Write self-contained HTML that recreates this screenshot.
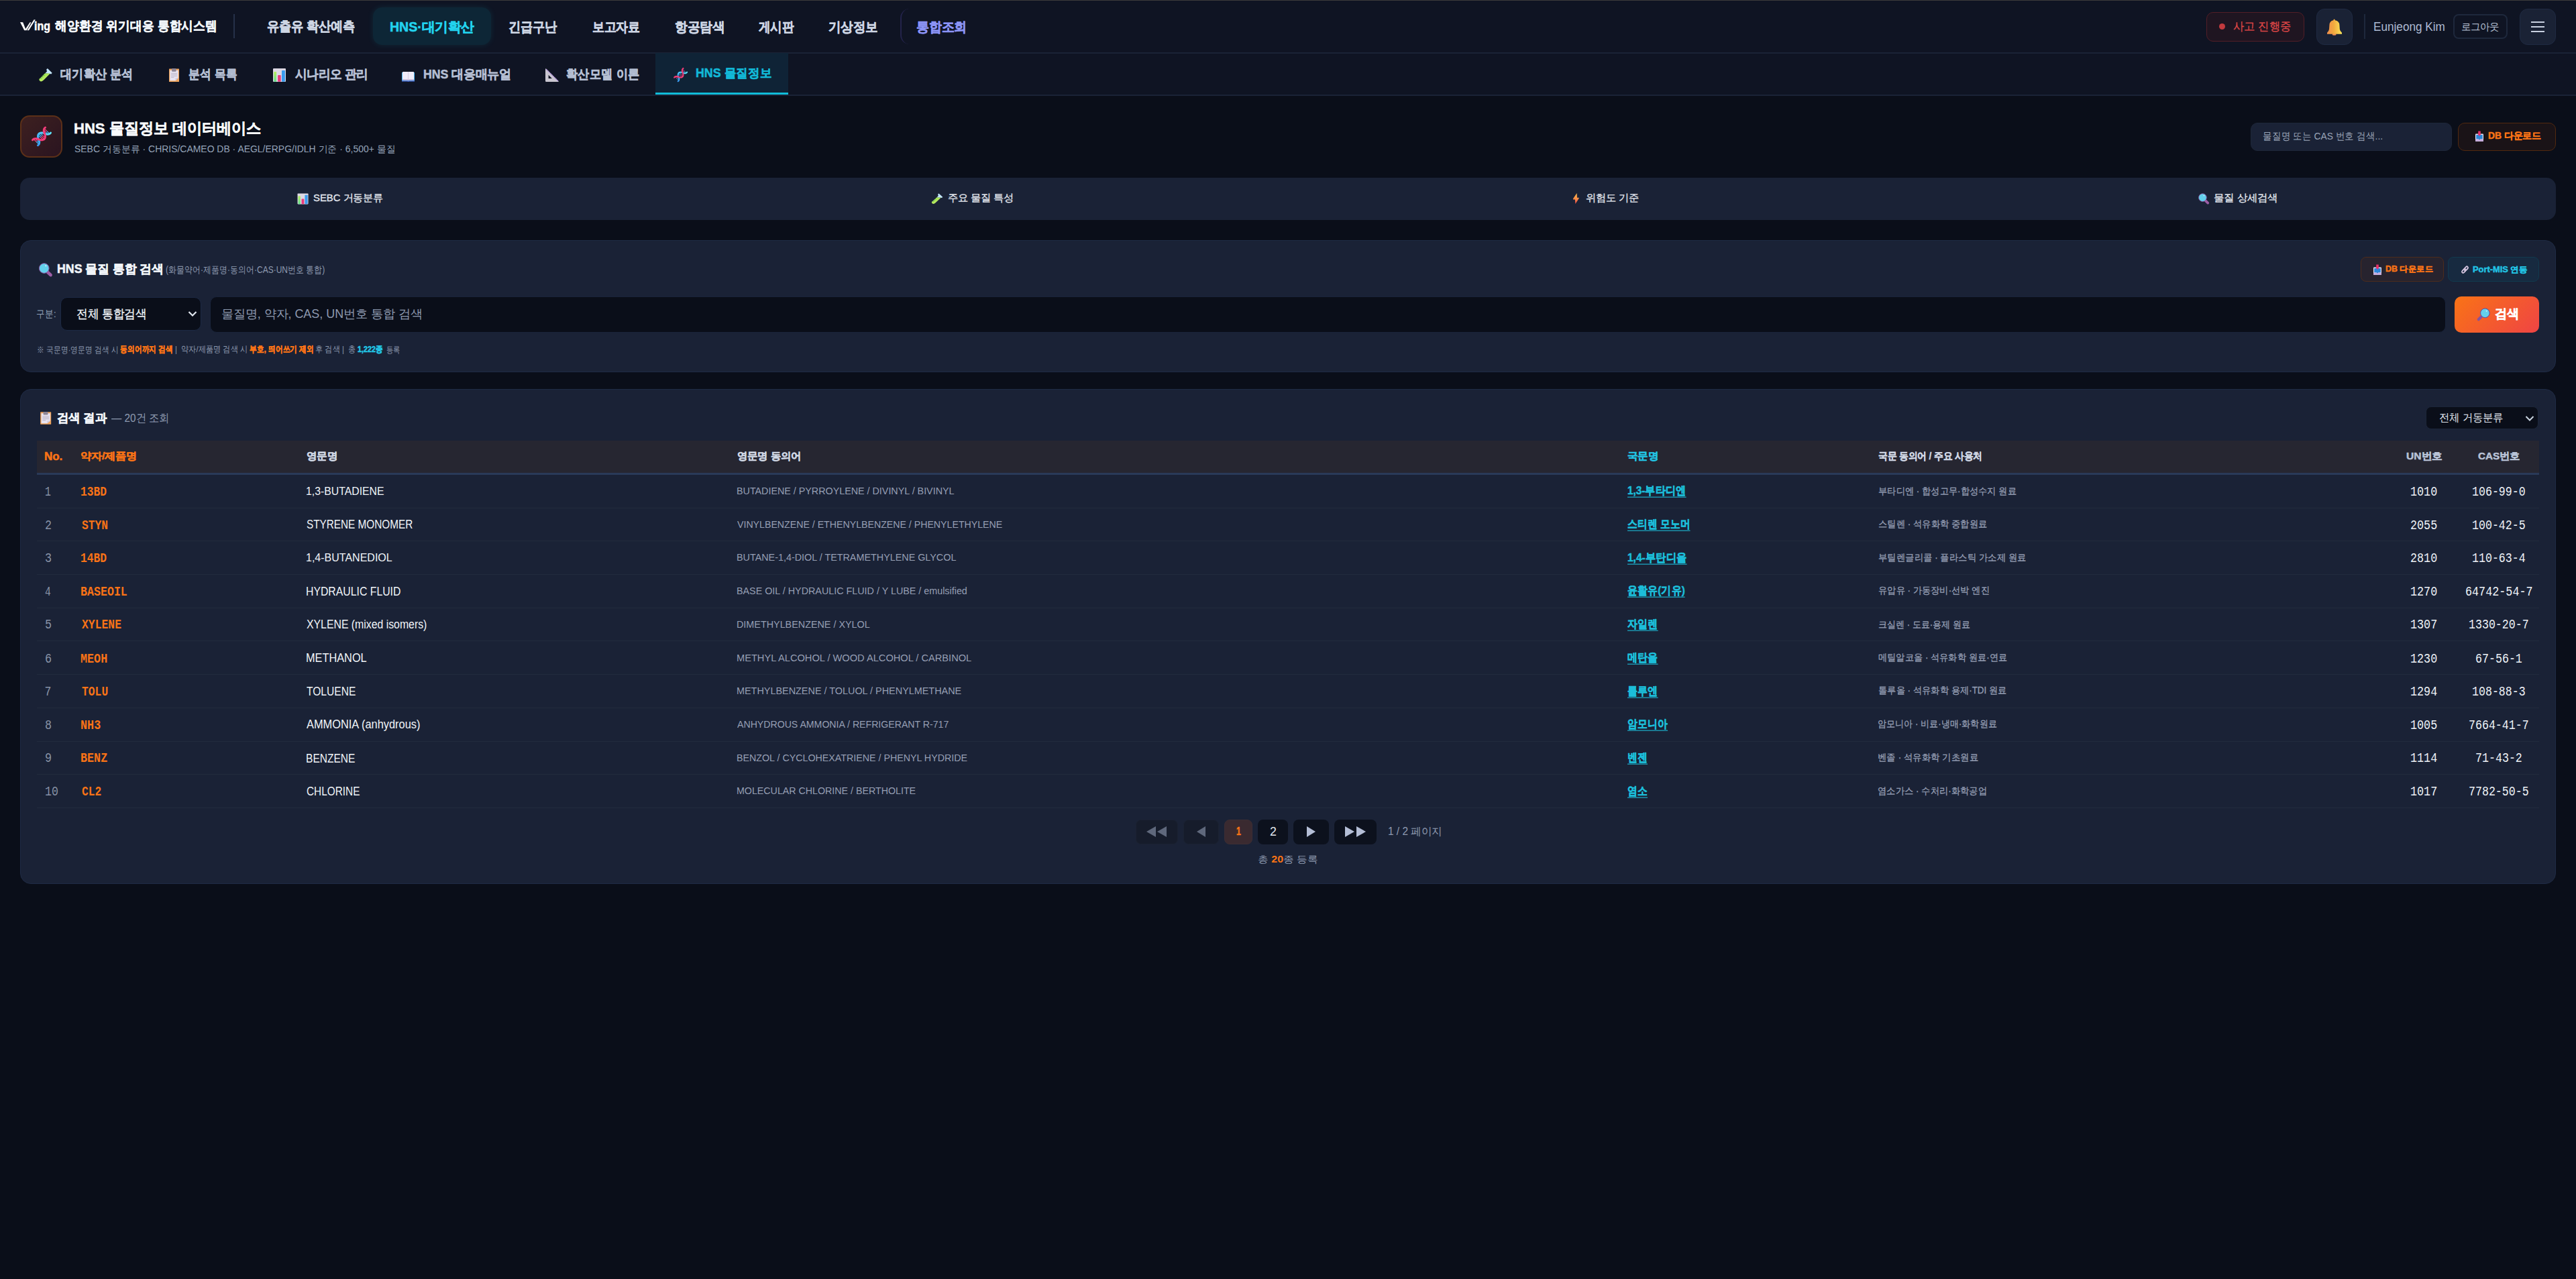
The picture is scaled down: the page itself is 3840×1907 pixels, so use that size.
<!DOCTYPE html>
<html lang="ko"><head><meta charset="utf-8"><title>HNS 물질정보</title>
<style>
*{box-sizing:border-box;margin:0;padding:0}
html,body{width:3840px;height:1907px;overflow:hidden}
body{background:#0a0e19;font-family:"Liberation Sans",sans-serif;color:#e2e8f0;position:relative}
.a{position:absolute}
.t{white-space:nowrap;transform-origin:0 50%}
</style></head><body>
<div class="a" style="left:0px;top:0px;width:3840px;height:1px;background:#3c3c3c"></div>
<div class="a" style="left:0px;top:1px;width:3840px;height:77px;background:#0f1423"></div>
<div class="a" style="left:0px;top:78px;width:3840px;height:2px;background:#1a2336"></div>
<div class="a" style="left:0px;top:80px;width:3840px;height:61px;background:#0f1423"></div>
<div class="a" style="left:0px;top:141px;width:3840px;height:2px;background:#1a2336"></div>
<svg class="a" style="left:20px;top:20px" width="40" height="40" viewBox="0 0 40 40"><path d="M10 13 L14.2 13.2 L18.6 24.6 L16.2 25.2 Z" fill="#fff"/><path d="M16.6 25.2 L24.6 13.2 L26.4 13.4 L19.6 25.2 Z" fill="#fff"/><path d="M20.4 25.2 L30.6 9.2 L32.8 9.4 L23 25.2 Z" fill="#fff"/></svg>
<div class="a t" id="t1" style="left:50.8px;top:20.0px;height:38px;line-height:38px;font-size:19px;color:#ffffff;font-weight:bold;-webkit-text-stroke:0.5px #ffffff;transform:scale(0.8382,1.0000);">ing</div>
<div class="a t" id="t2" style="left:82.1px;top:21.0px;height:36px;line-height:36px;font-size:18px;color:#f1f5f9;font-weight:bold;-webkit-text-stroke:0.5px #f1f5f9;transform:scale(0.9918,1.0640);">해양환경 위기대응 통합시스템</div>
<div class="a" style="left:348px;top:21px;width:2px;height:36px;background:#263149"></div>
<div class="a" style="left:556px;top:11px;width:176px;height:56px;border-radius:14px;background:#0d2636;box-shadow:0 0 10px rgba(34,211,238,0.10)"></div>
<div class="a t" id="t3" style="left:397.5px;top:21.0px;height:36px;line-height:36px;font-size:18px;color:#cdd5e3;font-weight:bold;-webkit-text-stroke:0.5px #cdd5e3;transform:scale(1.0000,1.0980);">유출유 확산예측</div>
<div class="a t" id="t4" style="left:580.5px;top:21.5px;height:36px;line-height:36px;font-size:18px;color:#22d3ee;font-weight:bold;-webkit-text-stroke:0.5px #22d3ee;transform:scale(1.0863,1.0980);">HNS·대기확산</div>
<div class="a t" id="t5" style="left:757.5px;top:21.5px;height:36px;line-height:36px;font-size:18px;color:#cdd5e3;font-weight:bold;-webkit-text-stroke:0.5px #cdd5e3;transform:scale(1.0006,1.0980);">긴급구난</div>
<div class="a t" id="t6" style="left:882.5px;top:21.5px;height:36px;line-height:36px;font-size:18px;color:#cdd5e3;font-weight:bold;-webkit-text-stroke:0.5px #cdd5e3;transform:scale(0.9861,1.0980);">보고자료</div>
<div class="a t" id="t7" style="left:1005.5px;top:21.5px;height:36px;line-height:36px;font-size:18px;color:#cdd5e3;font-weight:bold;-webkit-text-stroke:0.5px #cdd5e3;transform:scale(1.0291,1.0980);">항공탐색</div>
<div class="a t" id="t8" style="left:1131.1px;top:21.5px;height:36px;line-height:36px;font-size:18px;color:#cdd5e3;font-weight:bold;-webkit-text-stroke:0.5px #cdd5e3;transform:scale(0.9643,1.0980);">게시판</div>
<div class="a t" id="t9" style="left:1234.5px;top:21.5px;height:36px;line-height:36px;font-size:18px;color:#cdd5e3;font-weight:bold;-webkit-text-stroke:0.5px #cdd5e3;transform:scale(1.0139,1.0980);">기상정보</div>
<div class="a" style="left:1342px;top:13px;width:118px;height:53px;border-left:2px solid #23234a;border-radius:14px 0 0 14px"></div>
<div class="a t" id="t10" style="left:1365.5px;top:21.5px;height:36px;line-height:36px;font-size:18px;color:#8b93f5;font-weight:bold;-webkit-text-stroke:0.5px #8b93f5;transform:scale(1.0429,1.0980);">통합조회</div>
<div class="a" style="left:3289px;top:18px;width:146px;height:44px;border:1.5px solid #521e27;background:#1f1521;border-radius:10px"></div>
<div class="a" style="left:3308px;top:35px;width:9px;height:9px;border-radius:50%;background:#c23a3e"></div>
<div class="a t" id="t11" style="left:3328.9px;top:24.0px;height:32px;line-height:32px;font-size:16px;color:#dc4646;font-weight:normal;-webkit-text-stroke:0.3px #dc4646;transform:scale(1.0245,1.0700);">사고 진행중</div>
<div class="a" style="left:3453px;top:13px;width:54px;height:54px;border-radius:12px;background:#1a2235;border:1.5px solid #1f2a42"></div>
<svg class="a" style="left:3466.00px;top:24.99px" width="28.00" height="31.02" viewBox="4.0 1.0 28.0 30.9" preserveAspectRatio="none"><defs><linearGradient id="be1" x1="0" y1="0" x2="1" y2="0"><stop offset="0" stop-color="#f08e4c"/><stop offset="0.45" stop-color="#f2aa3e"/><stop offset="1" stop-color="#fde65a"/></linearGradient></defs><ellipse cx="17.6" cy="27.3" rx="3" ry="1.3" fill="#ee8c5a"/><path d="M17.6 4.4 Q16.4 4.4 16.4 6.3 Q10.8 7 10.4 13.5 L10 19.5 Q9.6 22.8 7 24.6 L7 26.6 L29 26.6 L29 24.6 Q26.2 22.8 25.8 19.5 L25.4 13.5 Q25 7 18.8 6.3 Q18.8 4.4 17.6 4.4 Z" fill="url(#be1)"/></svg>
<div class="a" style="left:3524px;top:21px;width:2px;height:37px;background:#1e283c"></div>
<div class="a t" id="t12" style="left:3537.8px;top:22.5px;height:34px;line-height:34px;font-size:17px;color:#aebbd3;font-weight:normal;transform:scale(1.0096,1.1000);">Eunjeong Kim</div>
<div class="a" style="left:3657px;top:21px;width:81px;height:37px;border:2px solid #1e283c;border-radius:8px"></div>
<div class="a t" id="t13" style="left:3669.0px;top:25.5px;height:28px;line-height:28px;font-size:14px;color:#b9c3d6;font-weight:normal;transform:scale(1.0007,1.0377);">로그아웃</div>
<div class="a" style="left:3756px;top:13px;width:54px;height:54px;border-radius:12px;background:#1a2235;border:1.5px solid #1f2a42"></div>
<div class="a" style="left:3773px;top:32px;width:20px;height:2px;background:#c8d0e0"></div>
<div class="a" style="left:3773px;top:39px;width:20px;height:2px;background:#c8d0e0"></div>
<div class="a" style="left:3773px;top:46px;width:20px;height:2px;background:#c8d0e0"></div>
<div class="a" style="left:977px;top:79px;width:198px;height:62px;background:#0f2336"></div>
<div class="a" style="left:977px;top:138px;width:198px;height:3px;background:#10bcd8"></div>
<svg class="a" style="left:55.00px;top:99.00px" width="26.00" height="26.00" viewBox="-3.0 -3.0 26.0 26.0" preserveAspectRatio="none"><defs><linearGradient id="tt2" x1="0" y1="0" x2="1" y2="1"><stop offset="0" stop-color="#86dc3c"/><stop offset="1" stop-color="#e0f47e"/></linearGradient></defs><path d="M9 7.6 L12 4.6 L11.2 1.6 L12.9 0 L19.7 6.8 L18.2 8.4 L16.4 7.9 Z" fill="#c2e4fb"/><path d="M8.8 7.6 L16.8 7.6 L7.2 17.3 Q3.8 20.9 1.2 18.5 Q-1 16 2.2 14.2 Z" fill="url(#tt2)"/><path d="M6.6 9.6 l1.3 1.3 M4.4 11.8 l1.3 1.3 M2.4 13.9 l1.2 1.2" stroke="#177a66" stroke-width="0.9" fill="none"/></svg>
<div class="a t" id="t14" style="left:89.6px;top:94.0px;height:34px;line-height:34px;font-size:17px;color:#b4bed2;font-weight:bold;-webkit-text-stroke:0.5px #b4bed2;transform:scale(1.0196,1.1400);">대기확산 분석</div>
<svg class="a" style="left:249.00px;top:98.97px" width="21.00" height="26.06" viewBox="5.0 4.2 21.0 25.8" preserveAspectRatio="none"><rect x="8" y="7.7" width="15" height="19.3" rx="0.6" fill="#eea45e"/><path d="M9.3 9.8 L21.7 9.8 L21.7 21.3 L17.6 25.3 L9.3 25.3 Z" fill="#e7e3f1"/><path d="M17.6 25.3 L17.6 21.3 L21.7 21.3 Z" fill="#cfc9de"/><rect x="12.1" y="7.2" width="6.5" height="4.7" rx="0.9" fill="#8d8595"/><g stroke="#b8b1c3" stroke-width="0.9"><line x1="11" y1="14.4" x2="20" y2="14.4"/><line x1="11" y1="16.4" x2="20" y2="16.4"/><line x1="11" y1="18.4" x2="20" y2="18.4"/><line x1="11" y1="20.4" x2="15.5" y2="20.4"/></g></svg>
<div class="a t" id="t15" style="left:280.6px;top:94.0px;height:34px;line-height:34px;font-size:17px;color:#b4bed2;font-weight:bold;-webkit-text-stroke:0.5px #b4bed2;transform:scale(1.0004,1.1400);">분석 목록</div>
<svg class="a" style="left:404.00px;top:99.00px" width="25.00" height="26.00" viewBox="4.0 4.0 25.0 26.0" preserveAspectRatio="none"><defs><linearGradient id="bc3" x1="0" y1="0" x2="0" y2="1"><stop offset="0" stop-color="#b6ee5c"/><stop offset="1" stop-color="#5ede8c"/></linearGradient></defs><rect x="7" y="7" width="19" height="20" rx="1" fill="#dcd8e4"/><rect x="8.3" y="11.9" width="3.8" height="14.9" rx="0.6" fill="url(#bc3)"/><rect x="14.1" y="17" width="4.6" height="9.8" rx="0.8" fill="#ea3c7c"/><rect x="20" y="9.9" width="4.9" height="16.9" rx="0.8" fill="#3a9cee"/></svg>
<div class="a t" id="t16" style="left:440.2px;top:94.5px;height:34px;line-height:34px;font-size:17px;color:#b4bed2;font-weight:bold;-webkit-text-stroke:0.5px #b4bed2;transform:scale(1.0193,1.0918);">시나리오 관리</div>
<svg class="a" style="left:596.00px;top:104.02px" width="25.00" height="20.96" viewBox="4.0 8.9 25.0 21.1" preserveAspectRatio="none"><path d="M7 12.9 L26 12.9 L26 26.2 L17.6 26.2 L16.5 27 L15.4 26.2 L7 26.2 Z" fill="#4ab6f6"/><path d="M7 25.2 L26 25.2 L26 26.4 L17.6 26.4 L16.5 27 L15.4 26.4 L7 26.4 Z" fill="#4a5cc0"/><rect x="8" y="11.9" width="17" height="12.7" rx="0.8" fill="#efebf8"/><path d="M8 23 L25 23 L25 24.6 L17.2 24.6 L16.5 25.3 L15.8 24.6 L8 24.6 Z" fill="#c9b8d8"/><line x1="16.5" y1="12" x2="16.5" y2="24.8" stroke="#cfc7e0" stroke-width="0.8"/></svg>
<div class="a t" id="t17" style="left:630.6px;top:94.5px;height:34px;line-height:34px;font-size:17px;color:#b4bed2;font-weight:bold;-webkit-text-stroke:0.5px #b4bed2;transform:scale(1.0409,1.0918);">HNS 대응매뉴얼</div>
<svg class="a" style="left:810.00px;top:99.00px" width="26.00" height="26.00" viewBox="-3.0 -3.0 26.0 26.0" preserveAspectRatio="none"><path d="M0 1.2 Q0 0 1.1 0.4 L19.6 18.9 Q20.2 20 19 20 L1.2 20 Q0 20 0 18.8 Z" fill="#c9c6d0"/><path d="M4.6 9.8 L4.6 14.9 L9.8 14.9 Z" fill="#0f1423"/><circle cx="1.90" cy="1.90" r="0.75" fill="#a872ee"/><circle cx="3.92" cy="3.92" r="0.75" fill="#a872ee"/><circle cx="5.94" cy="5.94" r="0.75" fill="#a872ee"/><circle cx="7.96" cy="7.96" r="0.75" fill="#a872ee"/><circle cx="9.98" cy="9.98" r="0.75" fill="#a872ee"/><circle cx="12.00" cy="12.00" r="0.75" fill="#a872ee"/><circle cx="14.02" cy="14.02" r="0.75" fill="#a872ee"/><circle cx="16.04" cy="16.04" r="0.75" fill="#a872ee"/><circle cx="18.06" cy="18.06" r="0.75" fill="#a872ee"/></svg>
<div class="a t" id="t18" style="left:843.6px;top:94.0px;height:34px;line-height:34px;font-size:17px;color:#b4bed2;font-weight:bold;-webkit-text-stroke:0.5px #b4bed2;transform:scale(1.0283,1.1400);">확산모델 이론</div>
<svg class="a" style="left:1001.90px;top:98.86px" width="25.20" height="25.27" viewBox="4.0 5.5 36.0 35.5" preserveAspectRatio="none"><defs><linearGradient id="dn4" x1="0" y1="1" x2="1" y2="0"><stop offset="0" stop-color="#3a9cf6"/><stop offset="1" stop-color="#5ee4fa"/></linearGradient></defs><line x1="18.06" y1="35.10" x2="14.08" y2="31.12" stroke="#3eb4f4" stroke-width="1.4"/><line x1="14.08" y1="31.12" x2="10.10" y2="27.14" stroke="#e8407c" stroke-width="1.4"/><line x1="18.74" y1="32.67" x2="15.64" y2="29.56" stroke="#3eb4f4" stroke-width="1.4"/><line x1="15.64" y1="29.56" x2="12.53" y2="26.46" stroke="#e8407c" stroke-width="1.4"/><line x1="16.76" y1="21.07" x2="20.44" y2="24.76" stroke="#3eb4f4" stroke-width="1.4"/><line x1="20.44" y1="24.76" x2="24.13" y2="28.44" stroke="#e8407c" stroke-width="1.4"/><line x1="17.90" y1="19.10" x2="22.00" y2="23.20" stroke="#3eb4f4" stroke-width="1.4"/><line x1="22.00" y1="23.20" x2="26.10" y2="27.30" stroke="#e8407c" stroke-width="1.4"/><line x1="19.87" y1="17.96" x2="23.56" y2="21.64" stroke="#3eb4f4" stroke-width="1.4"/><line x1="23.56" y1="21.64" x2="27.24" y2="25.33" stroke="#e8407c" stroke-width="1.4"/><line x1="31.47" y1="19.94" x2="28.36" y2="16.84" stroke="#3eb4f4" stroke-width="1.4"/><line x1="28.36" y1="16.84" x2="25.26" y2="13.73" stroke="#e8407c" stroke-width="1.4"/><line x1="33.90" y1="19.26" x2="29.92" y2="15.28" stroke="#3eb4f4" stroke-width="1.4"/><line x1="29.92" y1="15.28" x2="25.94" y2="11.30" stroke="#e8407c" stroke-width="1.4"/><path d="M16.45 36.74 L16.89 36.45 L17.29 36.11 L17.64 35.73 L17.94 35.30 L18.20 34.82 L18.41 34.30 L18.57 33.73 L18.69 33.11 L18.76 32.44 L18.77 31.72 L18.72 30.94 L18.60 30.08 L18.36 29.11 L17.77 27.78 L16.91 26.19 L16.65 25.19 L16.52 24.33 L16.46 23.54 L16.47 22.81 L16.53 22.14 L16.64 21.51 L16.80 20.94 L17.01 20.41 L17.26 19.93 L17.55 19.49 L17.90 19.10 L18.29 18.75 L18.73 18.46 L19.21 18.21 L19.74 18.00 L20.31 17.84 L20.94 17.73 L21.61 17.67 L22.34 17.66 L23.13 17.72 L23.99 17.85 L24.99 18.11 L26.58 18.97 L27.91 19.56 L28.88 19.80 L29.74 19.92 L30.52 19.97 L31.24 19.96 L31.91 19.89 L32.53 19.77 L33.10 19.61 L33.62 19.40 L34.10 19.14 L34.53 18.84 L34.91 18.49 L35.25 18.09 L35.54 17.65" fill="none" stroke="url(#dn4)" stroke-width="2.9" stroke-linecap="round"/><path d="M8.46 28.75 L8.75 28.31 L9.09 27.91 L9.47 27.56 L9.90 27.26 L10.38 27.00 L10.90 26.79 L11.47 26.63 L12.09 26.51 L12.76 26.44 L13.48 26.43 L14.26 26.48 L15.12 26.60 L16.09 26.84 L17.42 27.43 L19.01 28.29 L20.01 28.55 L20.87 28.68 L21.66 28.74 L22.39 28.73 L23.06 28.67 L23.69 28.56 L24.26 28.40 L24.79 28.19 L25.27 27.94 L25.71 27.65 L26.10 27.30 L26.45 26.91 L26.74 26.47 L26.99 25.99 L27.20 25.46 L27.36 24.89 L27.47 24.26 L27.53 23.59 L27.54 22.86 L27.48 22.07 L27.35 21.21 L27.09 20.21 L26.23 18.62 L25.64 17.29 L25.40 16.32 L25.28 15.46 L25.23 14.68 L25.24 13.96 L25.31 13.29 L25.43 12.67 L25.59 12.10 L25.80 11.58 L26.06 11.10 L26.36 10.67 L26.71 10.29 L27.11 9.95 L27.55 9.66" fill="none" stroke="#f23c78" stroke-width="2.9" stroke-linecap="round"/></svg>
<div class="a t" id="t19" style="left:1036.6px;top:92.5px;height:34px;line-height:34px;font-size:17px;color:#12b8d6;font-weight:bold;-webkit-text-stroke:0.5px #12b8d6;transform:scale(1.0470,1.0800);">HNS 물질정보</div>
<div class="a" style="left:30px;top:172px;width:63px;height:63px;border-radius:14px;border:2px solid #5c3018;background:linear-gradient(135deg,#3d2020,#2a1420)"></div>
<svg class="a" style="left:44.00px;top:186.05px" width="36.00" height="34.90" viewBox="4.0 5.5 36.0 35.5" preserveAspectRatio="none"><defs><linearGradient id="dn5" x1="0" y1="1" x2="1" y2="0"><stop offset="0" stop-color="#3a9cf6"/><stop offset="1" stop-color="#5ee4fa"/></linearGradient></defs><line x1="18.06" y1="35.10" x2="14.08" y2="31.12" stroke="#3eb4f4" stroke-width="1.4"/><line x1="14.08" y1="31.12" x2="10.10" y2="27.14" stroke="#e8407c" stroke-width="1.4"/><line x1="18.74" y1="32.67" x2="15.64" y2="29.56" stroke="#3eb4f4" stroke-width="1.4"/><line x1="15.64" y1="29.56" x2="12.53" y2="26.46" stroke="#e8407c" stroke-width="1.4"/><line x1="16.76" y1="21.07" x2="20.44" y2="24.76" stroke="#3eb4f4" stroke-width="1.4"/><line x1="20.44" y1="24.76" x2="24.13" y2="28.44" stroke="#e8407c" stroke-width="1.4"/><line x1="17.90" y1="19.10" x2="22.00" y2="23.20" stroke="#3eb4f4" stroke-width="1.4"/><line x1="22.00" y1="23.20" x2="26.10" y2="27.30" stroke="#e8407c" stroke-width="1.4"/><line x1="19.87" y1="17.96" x2="23.56" y2="21.64" stroke="#3eb4f4" stroke-width="1.4"/><line x1="23.56" y1="21.64" x2="27.24" y2="25.33" stroke="#e8407c" stroke-width="1.4"/><line x1="31.47" y1="19.94" x2="28.36" y2="16.84" stroke="#3eb4f4" stroke-width="1.4"/><line x1="28.36" y1="16.84" x2="25.26" y2="13.73" stroke="#e8407c" stroke-width="1.4"/><line x1="33.90" y1="19.26" x2="29.92" y2="15.28" stroke="#3eb4f4" stroke-width="1.4"/><line x1="29.92" y1="15.28" x2="25.94" y2="11.30" stroke="#e8407c" stroke-width="1.4"/><path d="M16.45 36.74 L16.89 36.45 L17.29 36.11 L17.64 35.73 L17.94 35.30 L18.20 34.82 L18.41 34.30 L18.57 33.73 L18.69 33.11 L18.76 32.44 L18.77 31.72 L18.72 30.94 L18.60 30.08 L18.36 29.11 L17.77 27.78 L16.91 26.19 L16.65 25.19 L16.52 24.33 L16.46 23.54 L16.47 22.81 L16.53 22.14 L16.64 21.51 L16.80 20.94 L17.01 20.41 L17.26 19.93 L17.55 19.49 L17.90 19.10 L18.29 18.75 L18.73 18.46 L19.21 18.21 L19.74 18.00 L20.31 17.84 L20.94 17.73 L21.61 17.67 L22.34 17.66 L23.13 17.72 L23.99 17.85 L24.99 18.11 L26.58 18.97 L27.91 19.56 L28.88 19.80 L29.74 19.92 L30.52 19.97 L31.24 19.96 L31.91 19.89 L32.53 19.77 L33.10 19.61 L33.62 19.40 L34.10 19.14 L34.53 18.84 L34.91 18.49 L35.25 18.09 L35.54 17.65" fill="none" stroke="url(#dn5)" stroke-width="2.9" stroke-linecap="round"/><path d="M8.46 28.75 L8.75 28.31 L9.09 27.91 L9.47 27.56 L9.90 27.26 L10.38 27.00 L10.90 26.79 L11.47 26.63 L12.09 26.51 L12.76 26.44 L13.48 26.43 L14.26 26.48 L15.12 26.60 L16.09 26.84 L17.42 27.43 L19.01 28.29 L20.01 28.55 L20.87 28.68 L21.66 28.74 L22.39 28.73 L23.06 28.67 L23.69 28.56 L24.26 28.40 L24.79 28.19 L25.27 27.94 L25.71 27.65 L26.10 27.30 L26.45 26.91 L26.74 26.47 L26.99 25.99 L27.20 25.46 L27.36 24.89 L27.47 24.26 L27.53 23.59 L27.54 22.86 L27.48 22.07 L27.35 21.21 L27.09 20.21 L26.23 18.62 L25.64 17.29 L25.40 16.32 L25.28 15.46 L25.23 14.68 L25.24 13.96 L25.31 13.29 L25.43 12.67 L25.59 12.10 L25.80 11.58 L26.06 11.10 L26.36 10.67 L26.71 10.29 L27.11 9.95 L27.55 9.66" fill="none" stroke="#f23c78" stroke-width="2.9" stroke-linecap="round"/></svg>
<div class="a t" id="t20" style="left:110.2px;top:168.0px;height:46px;line-height:46px;font-size:23px;color:#f8fafc;font-weight:bold;-webkit-text-stroke:0.5px #f8fafc;transform:scale(0.9586,0.9900);">HNS 물질정보 데이터베이스</div>
<div class="a t" id="t21" style="left:110.8px;top:206.5px;height:30px;line-height:30px;font-size:15px;color:#94a3b8;font-weight:normal;transform:scale(0.9300,0.9450);">SEBC 거동분류 · CHRIS/CAMEO DB · AEGL/ERPG/IDLH 기준 · 6,500+ 물질</div>
<div class="a" style="left:3355px;top:183px;width:300px;height:42px;border-radius:10px;background:#1a2236;border:1px solid #1e2739"></div>
<div class="a t" id="t22" style="left:3373.1px;top:189.5px;height:26px;line-height:26px;font-size:13px;color:#9aa5b8;font-weight:normal;transform:scale(1.0596,1.1846);">물질명 또는 CAS 번호 검색...</div>
<div class="a" style="left:3664px;top:183px;width:146px;height:42px;border-radius:10px;border:1.5px solid #52290f;background:#1a1317"></div>
<svg class="a" style="left:3687.00px;top:192.00px" width="18.00" height="22.00" viewBox="3.0 2.0 18.0 22.0" preserveAspectRatio="none"><rect x="6" y="9.4" width="12" height="11.4" rx="0.9" fill="#e6e0f0"/><rect x="6" y="17.4" width="12" height="3.4" rx="0.9" fill="#c7addf"/><path d="M7.2 10.9 L16.8 10.9 L16.8 17.2 L13.4 17.2 L12 18.4 L10.6 17.2 L7.2 17.2 Z" fill="#2d86d8"/><path d="M10.2 5.6 L13.8 5.6 L13.8 10 L14.4 10 L12 12.9 L9.6 10 L10.2 10 Z" fill="#e8306c"/></svg>
<div class="a t" id="t23" style="left:3708.8px;top:188.0px;height:28px;line-height:28px;font-size:14px;color:#f97316;font-weight:bold;-webkit-text-stroke:0.5px #f97316;transform:scale(0.9878,0.9900);">DB 다운로드</div>
<div class="a" style="left:30px;top:265px;width:3780px;height:63px;border-radius:14px;background:#1a2236"></div>
<svg class="a" style="left:441.47px;top:285.60px" width="21.05" height="20.80" viewBox="4.0 4.0 25.0 26.0" preserveAspectRatio="none"><defs><linearGradient id="bc6" x1="0" y1="0" x2="0" y2="1"><stop offset="0" stop-color="#b6ee5c"/><stop offset="1" stop-color="#5ede8c"/></linearGradient></defs><rect x="7" y="7" width="19" height="20" rx="1" fill="#dcd8e4"/><rect x="8.3" y="11.9" width="3.8" height="14.9" rx="0.6" fill="url(#bc6)"/><rect x="14.1" y="17" width="4.6" height="9.8" rx="0.8" fill="#ea3c7c"/><rect x="20" y="9.9" width="4.9" height="16.9" rx="0.8" fill="#3a9cee"/></svg>
<div class="a t" id="t24" style="left:466.8px;top:280.0px;height:30px;line-height:30px;font-size:15px;color:#e5e9f0;font-weight:normal;-webkit-text-stroke:0.3px #e5e9f0;transform:scale(0.9907,0.9844);">SEBC 거동분류</div>
<svg class="a" style="left:1386.45px;top:285.60px" width="22.10" height="20.80" viewBox="-3.0 -3.0 26.0 26.0" preserveAspectRatio="none"><defs><linearGradient id="tt7" x1="0" y1="0" x2="1" y2="1"><stop offset="0" stop-color="#86dc3c"/><stop offset="1" stop-color="#e0f47e"/></linearGradient></defs><path d="M9 7.6 L12 4.6 L11.2 1.6 L12.9 0 L19.7 6.8 L18.2 8.4 L16.4 7.9 Z" fill="#c2e4fb"/><path d="M8.8 7.6 L16.8 7.6 L7.2 17.3 Q3.8 20.9 1.2 18.5 Q-1 16 2.2 14.2 Z" fill="url(#tt7)"/><path d="M6.6 9.6 l1.3 1.3 M4.4 11.8 l1.3 1.3 M2.4 13.9 l1.2 1.2" stroke="#177a66" stroke-width="0.9" fill="none"/></svg>
<div class="a t" id="t25" style="left:1412.8px;top:280.0px;height:30px;line-height:30px;font-size:15px;color:#e5e9f0;font-weight:normal;-webkit-text-stroke:0.3px #e5e9f0;transform:scale(1.0000,0.9844);">주요 물질 특성</div>
<svg class="a" style="left:2342.13px;top:285.07px" width="14.74" height="21.85" viewBox="-3.0 -3.0 15.4 22.4" preserveAspectRatio="none"><defs><linearGradient id="bo8" x1="0" y1="0" x2="0" y2="1"><stop offset="0" stop-color="#fbbd4c"/><stop offset="0.55" stop-color="#f98a46"/><stop offset="1" stop-color="#f24848"/></linearGradient></defs><path d="M5.9 0 L0 8.9 L0.4 9.9 L3.1 9.9 L3.7 16.4 L9.4 7.8 L9.1 6.9 L6.4 6.9 Z" fill="url(#bo8)"/></svg>
<div class="a t" id="t26" style="left:2363.8px;top:280.0px;height:30px;line-height:30px;font-size:15px;color:#e5e9f0;font-weight:normal;-webkit-text-stroke:0.3px #e5e9f0;transform:scale(1.0000,0.9844);">위험도 기준</div>
<svg class="a" style="left:3274.00px;top:285.00px" width="22.00" height="22.00" viewBox="2.0 1.0 22.0 22.0" preserveAspectRatio="none"><line x1="15.6" y1="15.2" x2="19.2" y2="18.6" stroke="#9d5ea6" stroke-width="3.8" stroke-linecap="round"/><circle cx="11.4" cy="10.6" r="5.9" fill="#63d0ec" stroke="#8c4f9e" stroke-width="0.8"/><circle cx="13.4" cy="7.6" r="0.9" fill="#cfe9f8"/></svg>
<div class="a t" id="t27" style="left:3299.8px;top:280.0px;height:30px;line-height:30px;font-size:15px;color:#e5e9f0;font-weight:normal;-webkit-text-stroke:0.3px #e5e9f0;transform:scale(1.0108,0.9844);">물질 상세검색</div>
<div class="a" style="left:30px;top:358px;width:3780px;height:197px;border-radius:16px;background:#1a2236;border:1px solid #1f2b45"></div>
<svg class="a" style="left:54.25px;top:388.25px" width="27.50" height="27.50" viewBox="2.0 1.0 22.0 22.0" preserveAspectRatio="none"><line x1="15.6" y1="15.2" x2="19.2" y2="18.6" stroke="#9d5ea6" stroke-width="3.8" stroke-linecap="round"/><circle cx="11.4" cy="10.6" r="5.9" fill="#63d0ec" stroke="#8c4f9e" stroke-width="0.8"/><circle cx="13.4" cy="7.6" r="0.9" fill="#cfe9f8"/></svg>
<div class="a t" id="t28" style="left:84.5px;top:383.0px;height:36px;line-height:36px;font-size:18px;color:#f1f5f9;font-weight:bold;-webkit-text-stroke:0.5px #f1f5f9;transform:scale(0.9879,0.9961);">HNS 물질 통합 검색</div>
<div class="a t" id="t29" style="left:247.0px;top:389.5px;height:24px;line-height:24px;font-size:12px;color:#8e9ab0;font-weight:normal;transform:scale(1.0001,1.1846);">(화물약어·제품명·동의어·CAS·UN번호 통합)</div>
<div class="a" style="left:3519px;top:383px;width:124px;height:37px;border-radius:8px;border:1.5px solid #4d2c1c;background:#27232e"></div>
<svg class="a" style="left:3535.00px;top:391.00px" width="18.00" height="22.00" viewBox="3.0 2.0 18.0 22.0" preserveAspectRatio="none"><rect x="6" y="9.4" width="12" height="11.4" rx="0.9" fill="#e6e0f0"/><rect x="6" y="17.4" width="12" height="3.4" rx="0.9" fill="#c7addf"/><path d="M7.2 10.9 L16.8 10.9 L16.8 17.2 L13.4 17.2 L12 18.4 L10.6 17.2 L7.2 17.2 Z" fill="#2d86d8"/><path d="M10.2 5.6 L13.8 5.6 L13.8 10 L14.4 10 L12 12.9 L9.6 10 L10.2 10 Z" fill="#e8306c"/></svg>
<div class="a t" id="t30" style="left:3555.9px;top:388.0px;height:26px;line-height:26px;font-size:13px;color:#f97316;font-weight:bold;-webkit-text-stroke:0.5px #f97316;transform:scale(0.9593,0.9450);">DB 다운로드</div>
<div class="a" style="left:3649px;top:383px;width:136px;height:37px;border-radius:8px;border:1.5px solid #113a4e;background:#172a40"></div>
<svg class="a" style="left:3665.00px;top:391.82px" width="19.00" height="20.36" viewBox="2.0 2.5999999999999996 19.0 19.2" preserveAspectRatio="none"><g fill="none" stroke="#d6c6e0" stroke-width="1.8"><rect x="9.8" y="8.85" width="6.7" height="3.4" rx="1.7" transform="rotate(-45 13.15 10.55)"/><rect x="6.5" y="12.15" width="6.7" height="3.4" rx="1.7" transform="rotate(-45 9.85 13.85)"/></g></svg>
<div class="a t" id="t31" style="left:3685.9px;top:388.5px;height:26px;line-height:26px;font-size:13px;color:#22c3e3;font-weight:bold;-webkit-text-stroke:0.5px #22c3e3;transform:scale(0.9888,0.9450);">Port-MIS 연동</div>
<div class="a t" id="t32" style="left:54.1px;top:455.0px;height:26px;line-height:26px;font-size:13px;color:#94a3b8;font-weight:normal;transform:scale(1.0000,1.1917);">구분:</div>
<div class="a" style="left:90px;top:443px;width:210px;height:50px;border-radius:10px;background:#0a0e19;border:1px solid #1c2944"></div>
<div class="a t" id="t33" style="left:113.9px;top:451.5px;height:32px;line-height:32px;font-size:16px;color:#f1f5f9;font-weight:normal;-webkit-text-stroke:0.3px #f1f5f9;transform:scale(1.0409,1.1176);">전체 통합검색</div>
<svg class="a" style="left:280px;top:463px" width="14" height="10" viewBox="0 0 14 10"><path d="M1.5 2 L7 7.5 L12.5 2" fill="none" stroke="#e2e8f0" stroke-width="2.2"/></svg>
<div class="a" style="left:313px;top:442px;width:3333px;height:54px;border-radius:10px;background:#0a0e19;border:1.5px solid #19233a"></div>
<div class="a t" id="t34" style="left:329.8px;top:452.0px;height:34px;line-height:34px;font-size:17px;color:#8e9ab0;font-weight:normal;transform:scale(1.0534,1.0389);">물질명, 약자, CAS, UN번호 통합 검색</div>
<div class="a" style="left:3659px;top:442px;width:126px;height:54px;border-radius:10px;background:linear-gradient(135deg,#f97316,#ef4444)"></div>
<svg class="a" style="left:3690.00px;top:456.00px" width="24.00" height="25.00" viewBox="2.0 1.0 24.0 25.0" preserveAspectRatio="none"><line x1="10.6" y1="17.4" x2="6.8" y2="21.2" stroke="#86529e" stroke-width="4.2" stroke-linecap="round"/><circle cx="16.4" cy="11.8" r="6.8" fill="#63d0ec" stroke="#5a4aa2" stroke-width="1"/><circle cx="18.6" cy="8.8" r="1" fill="#d2eaf8"/></svg>
<div class="a t" id="t35" style="left:3718.5px;top:450.0px;height:36px;line-height:36px;font-size:18px;color:#ffffff;font-weight:bold;-webkit-text-stroke:0.5px #ffffff;transform:scale(1.0000,1.0450);">검색</div>
<div class="a t" id="t36" style="left:55.2px;top:509.5px;height:22px;line-height:22px;font-size:11px;color:#8e9ab0;font-weight:normal;transform:scale(0.9918,1.2100);">※ 국문명·영문명 검색 시</div>
<div class="a t" id="t37" style="left:179.0px;top:508.5px;height:22px;line-height:22px;font-size:11px;color:#f97316;font-weight:bold;-webkit-text-stroke:0.5px #f97316;transform:scale(0.9873,1.2100);">동의어까지 검색</div>
<div class="a t" id="t38" style="left:261.2px;top:509.0px;height:22px;line-height:22px;font-size:11px;color:#8e9ab0;font-weight:normal;transform:scale(1.0192,1.1917);">|&nbsp; 약자/제품명 검색 시</div>
<div class="a t" id="t39" style="left:372.0px;top:509.0px;height:22px;line-height:22px;font-size:11px;color:#f97316;font-weight:bold;-webkit-text-stroke:0.5px #f97316;transform:scale(0.9896,1.2100);">부호, 띄어쓰기 제외</div>
<div class="a t" id="t40" style="left:470.2px;top:509.0px;height:22px;line-height:22px;font-size:11px;color:#8e9ab0;font-weight:normal;transform:scale(1.0197,1.1917);">후 검색 |&nbsp; 총</div>
<div class="a t" id="t41" style="left:533.0px;top:508.5px;height:22px;line-height:22px;font-size:11px;color:#22c3e3;font-weight:bold;-webkit-text-stroke:0.5px #22c3e3;transform:scale(0.9757,1.2100);">1,222종</div>
<div class="a t" id="t42" style="left:576.0px;top:509.5px;height:22px;line-height:22px;font-size:11px;color:#8e9ab0;font-weight:normal;transform:scale(0.9524,1.2100);">등록</div>
<div class="a" style="left:30px;top:580px;width:3780px;height:738px;border-radius:16px;background:#1a2236;border:1px solid #1f2b45"></div>
<svg class="a" style="left:56.80px;top:611.12px" width="22.40" height="24.76" viewBox="5.0 4.2 21.0 25.8" preserveAspectRatio="none"><rect x="8" y="7.7" width="15" height="19.3" rx="0.6" fill="#eea45e"/><path d="M9.3 9.8 L21.7 9.8 L21.7 21.3 L17.6 25.3 L9.3 25.3 Z" fill="#e7e3f1"/><path d="M17.6 25.3 L17.6 21.3 L21.7 21.3 Z" fill="#cfc9de"/><rect x="12.1" y="7.2" width="6.5" height="4.7" rx="0.9" fill="#8d8595"/><g stroke="#b8b1c3" stroke-width="0.9"><line x1="11" y1="14.4" x2="20" y2="14.4"/><line x1="11" y1="16.4" x2="20" y2="16.4"/><line x1="11" y1="18.4" x2="20" y2="18.4"/><line x1="11" y1="20.4" x2="15.5" y2="20.4"/></g></svg>
<div class="a t" id="t43" style="left:84.5px;top:604.5px;height:36px;line-height:36px;font-size:18px;color:#f1f5f9;font-weight:bold;-webkit-text-stroke:0.5px #f1f5f9;transform:scale(0.9612,0.9900);">검색 결과</div>
<div class="a t" id="t44" style="left:165.8px;top:608.5px;height:28px;line-height:28px;font-size:14px;color:#8e9ab0;font-weight:normal;transform:scale(1.0909,1.2100);">— 20건 조회</div>
<div class="a" style="left:3616px;top:606px;width:168px;height:34px;border-radius:8px;background:#0a0e19;border:1px solid #1c2639"></div>
<div class="a t" id="t45" style="left:3635.9px;top:607.5px;height:30px;line-height:30px;font-size:15px;color:#e2e8f0;font-weight:normal;transform:scale(1.0108,1.0500);">전체 거동분류</div>
<svg class="a" style="left:3764px;top:619px" width="14" height="10" viewBox="0 0 14 10"><path d="M1.5 2 L7 7.5 L12.5 2" fill="none" stroke="#cbd5e1" stroke-width="2"/></svg>
<div class="a" style="left:55px;top:657px;width:3730px;height:48px;background:#262631"></div>
<div class="a" style="left:55px;top:705px;width:3730px;height:3px;background:#2a3a58"></div>
<div class="a t" id="t46" style="left:66.0px;top:665.0px;height:30px;line-height:30px;font-size:15px;color:#f97316;font-weight:bold;-webkit-text-stroke:0.5px #f97316;transform:scale(1.1304,1.1000);">No.</div>
<div class="a t" id="t47" style="left:120.0px;top:665.0px;height:30px;line-height:30px;font-size:15px;color:#f97316;font-weight:bold;-webkit-text-stroke:0.5px #f97316;transform:scale(1.0649,0.9844);">약자/제품명</div>
<div class="a t" id="t48" style="left:456.8px;top:665.0px;height:30px;line-height:30px;font-size:15px;color:#cfd6e3;font-weight:bold;-webkit-text-stroke:0.5px #cfd6e3;transform:scale(1.0227,0.9844);">영문명</div>
<div class="a t" id="t49" style="left:1098.8px;top:665.0px;height:30px;line-height:30px;font-size:15px;color:#cfd6e3;font-weight:bold;-webkit-text-stroke:0.5px #cfd6e3;transform:scale(1.0108,0.9844);">영문명 동의어</div>
<div class="a t" id="t50" style="left:2425.8px;top:665.0px;height:30px;line-height:30px;font-size:15px;color:#22c3e3;font-weight:bold;-webkit-text-stroke:0.5px #22c3e3;transform:scale(1.0227,0.9844);">국문명</div>
<div class="a t" id="t51" style="left:2799.8px;top:665.0px;height:30px;line-height:30px;font-size:15px;color:#cfd6e3;font-weight:bold;-webkit-text-stroke:0.5px #cfd6e3;transform:scale(0.9060,0.9844);">국문 동의어 / 주요 사용처</div>
<div class="a t" id="t52" style="left:3586.8px;top:665.0px;height:30px;line-height:30px;font-size:15px;color:#b8c2d6;font-weight:bold;-webkit-text-stroke:0.5px #b8c2d6;transform:scale(1.0392,0.9932);">UN번호</div>
<div class="a t" id="t53" style="left:3693.8px;top:665.0px;height:30px;line-height:30px;font-size:15px;color:#b8c2d6;font-weight:bold;-webkit-text-stroke:0.5px #b8c2d6;transform:scale(1.0164,0.9932);">CAS번호</div>
<div class="a" style="left:55px;top:757px;width:3730px;height:1px;background:#222b3d"></div>
<div class="a t" id="t54" style="left:66.6px;top:716.5px;height:33px;line-height:33px;font-size:16.5px;color:#8892a6;font-weight:normal;font-family:'Liberation Mono',monospace;transform:scale(0.9030,1.2458);">1</div>
<div class="a t" id="t55" style="left:120.2px;top:716.5px;height:33px;line-height:33px;font-size:16.5px;color:#f97316;font-weight:bold;font-family:'Liberation Mono',monospace;transform:scale(0.9883,1.2458);">13BD</div>
<div class="a t" id="t56" style="left:455.8px;top:715.5px;height:35px;line-height:35px;font-size:17.5px;color:#f1f5f9;font-weight:normal;transform:scale(0.9033,0.9000);">1,3-BUTADIENE</div>
<div class="a t" id="t57" style="left:1098.3px;top:718.0px;height:29px;line-height:29px;font-size:14.7px;color:#969fb4;font-weight:normal;transform:scale(0.9744,1.0000);">BUTADIENE / PYRROYLENE / DIVINYL / BIVINYL</div>
<div class="a t" id="t58" style="left:2425.7px;top:716.2px;height:32px;line-height:32px;font-size:16px;color:#1cbdd9;font-weight:bold;-webkit-text-stroke:0.5px #1cbdd9;transform:scale(0.9565,1.0800);text-decoration:underline;text-underline-offset:3px;text-decoration-thickness:1.3px">1,3-부타디엔</div>
<div class="a t" id="t59" style="left:2799.8px;top:717.5px;height:28px;line-height:28px;font-size:14px;color:#969fb4;font-weight:normal;-webkit-text-stroke:0.3px #969fb4;transform:scale(0.9491,1.0080);">부타디엔 · 합성고무·합성수지 원료</div>
<div class="a t" id="t60" style="left:3593.2px;top:716.5px;height:33px;line-height:33px;font-size:16.5px;color:#eef2f7;font-weight:normal;font-family:'Liberation Mono',monospace;transform:scale(1.0144,1.2458);">1010</div>
<div class="a t" id="t61" style="left:3684.8px;top:716.5px;height:33px;line-height:33px;font-size:16.5px;color:#eef2f7;font-weight:normal;font-family:'Liberation Mono',monospace;transform:scale(1.0067,1.2458);">106-99-0</div>
<div class="a" style="left:55px;top:806px;width:3730px;height:1px;background:#222b3d"></div>
<div class="a t" id="t62" style="left:66.6px;top:766.7px;height:33px;line-height:33px;font-size:16.5px;color:#8892a6;font-weight:normal;font-family:'Liberation Mono',monospace;transform:scale(1.0159,1.2458);">2</div>
<div class="a t" id="t63" style="left:121.8px;top:766.7px;height:33px;line-height:33px;font-size:16.5px;color:#f97316;font-weight:bold;font-family:'Liberation Mono',monospace;transform:scale(0.9883,1.2458);">STYN</div>
<div class="a t" id="t64" style="left:456.6px;top:765.2px;height:35px;line-height:35px;font-size:17.5px;color:#f1f5f9;font-weight:normal;transform:scale(0.8751,1.0115);">STYRENE MONOMER</div>
<div class="a t" id="t65" style="left:1099.1px;top:767.7px;height:29px;line-height:29px;font-size:14.7px;color:#969fb4;font-weight:normal;transform:scale(0.9646,1.0000);">VINYLBENZENE / ETHENYLBENZENE / PHENYLETHYLENE</div>
<div class="a t" id="t66" style="left:2425.7px;top:766.0px;height:32px;line-height:32px;font-size:16px;color:#1cbdd9;font-weight:bold;-webkit-text-stroke:0.5px #1cbdd9;transform:scale(0.9307,1.0800);text-decoration:underline;text-underline-offset:3px;text-decoration-thickness:1.3px">스티렌 모노머</div>
<div class="a t" id="t67" style="left:2799.8px;top:767.1px;height:28px;line-height:28px;font-size:14px;color:#969fb4;font-weight:normal;-webkit-text-stroke:0.3px #969fb4;transform:scale(0.9527,1.0080);">스틸렌 · 석유화학 중합원료</div>
<div class="a t" id="t68" style="left:3593.2px;top:766.7px;height:33px;line-height:33px;font-size:16.5px;color:#eef2f7;font-weight:normal;font-family:'Liberation Mono',monospace;transform:scale(1.0144,1.2458);">2055</div>
<div class="a t" id="t69" style="left:3684.8px;top:766.7px;height:33px;line-height:33px;font-size:16.5px;color:#eef2f7;font-weight:normal;font-family:'Liberation Mono',monospace;transform:scale(1.0067,1.2458);">100-42-5</div>
<div class="a" style="left:55px;top:856px;width:3730px;height:1px;background:#222b3d"></div>
<div class="a t" id="t70" style="left:66.6px;top:815.9px;height:33px;line-height:33px;font-size:16.5px;color:#8892a6;font-weight:normal;font-family:'Liberation Mono',monospace;transform:scale(1.0159,1.2458);">3</div>
<div class="a t" id="t71" style="left:120.2px;top:815.9px;height:33px;line-height:33px;font-size:16.5px;color:#f97316;font-weight:bold;font-family:'Liberation Mono',monospace;transform:scale(0.9883,1.2458);">14BD</div>
<div class="a t" id="t72" style="left:455.8px;top:814.9px;height:35px;line-height:35px;font-size:17.5px;color:#f1f5f9;font-weight:normal;transform:scale(0.9149,0.9000);">1,4-BUTANEDIOL</div>
<div class="a t" id="t73" style="left:1098.3px;top:817.4px;height:29px;line-height:29px;font-size:14.7px;color:#969fb4;font-weight:normal;transform:scale(0.9776,1.0000);">BUTANE-1,4-DIOL / TETRAMETHYLENE GLYCOL</div>
<div class="a t" id="t74" style="left:2425.7px;top:815.6px;height:32px;line-height:32px;font-size:16px;color:#1cbdd9;font-weight:bold;-webkit-text-stroke:0.5px #1cbdd9;transform:scale(0.9676,1.0800);text-decoration:underline;text-underline-offset:3px;text-decoration-thickness:1.3px">1,4-부탄디올</div>
<div class="a t" id="t75" style="left:2799.8px;top:816.7px;height:28px;line-height:28px;font-size:14px;color:#969fb4;font-weight:normal;-webkit-text-stroke:0.3px #969fb4;transform:scale(0.9586,1.0080);">부틸렌글리콜 · 플라스틱 가소제 원료</div>
<div class="a t" id="t76" style="left:3593.2px;top:815.9px;height:33px;line-height:33px;font-size:16.5px;color:#eef2f7;font-weight:normal;font-family:'Liberation Mono',monospace;transform:scale(1.0144,1.2458);">2810</div>
<div class="a t" id="t77" style="left:3684.8px;top:815.9px;height:33px;line-height:33px;font-size:16.5px;color:#eef2f7;font-weight:normal;font-family:'Liberation Mono',monospace;transform:scale(1.0067,1.2458);">110-63-4</div>
<div class="a" style="left:55px;top:906px;width:3730px;height:1px;background:#222b3d"></div>
<div class="a t" id="t78" style="left:67.4px;top:866.1px;height:33px;line-height:33px;font-size:16.5px;color:#8892a6;font-weight:normal;font-family:'Liberation Mono',monospace;transform:scale(0.8889,1.2458);">4</div>
<div class="a t" id="t79" style="left:120.2px;top:866.1px;height:33px;line-height:33px;font-size:16.5px;color:#f97316;font-weight:bold;font-family:'Liberation Mono',monospace;transform:scale(1.0077,1.2458);">BASEOIL</div>
<div class="a t" id="t80" style="left:455.8px;top:864.6px;height:35px;line-height:35px;font-size:17.5px;color:#f1f5f9;font-weight:normal;transform:scale(0.9032,1.0115);">HYDRAULIC FLUID</div>
<div class="a t" id="t81" style="left:1098.3px;top:867.1px;height:29px;line-height:29px;font-size:14.7px;color:#969fb4;font-weight:normal;transform:scale(0.9758,1.0000);">BASE OIL / HYDRAULIC FLUID / Y LUBE / emulsified</div>
<div class="a t" id="t82" style="left:2425.7px;top:865.4px;height:32px;line-height:32px;font-size:16px;color:#1cbdd9;font-weight:bold;-webkit-text-stroke:0.5px #1cbdd9;transform:scale(0.9451,1.0800);text-decoration:underline;text-underline-offset:3px;text-decoration-thickness:1.3px">윤활유(기유)</div>
<div class="a t" id="t83" style="left:2799.8px;top:866.3px;height:28px;line-height:28px;font-size:14px;color:#969fb4;font-weight:normal;-webkit-text-stroke:0.3px #969fb4;transform:scale(0.9480,1.0080);">유압유 · 가동장비·선박 엔진</div>
<div class="a t" id="t84" style="left:3593.2px;top:866.1px;height:33px;line-height:33px;font-size:16.5px;color:#eef2f7;font-weight:normal;font-family:'Liberation Mono',monospace;transform:scale(1.0144,1.2458);">1270</div>
<div class="a t" id="t85" style="left:3674.8px;top:866.1px;height:33px;line-height:33px;font-size:16.5px;color:#eef2f7;font-weight:normal;font-family:'Liberation Mono',monospace;transform:scale(1.0155,1.2458);">64742-54-7</div>
<div class="a" style="left:55px;top:955px;width:3730px;height:1px;background:#222b3d"></div>
<div class="a t" id="t86" style="left:66.6px;top:915.3px;height:33px;line-height:33px;font-size:16.5px;color:#8892a6;font-weight:normal;font-family:'Liberation Mono',monospace;transform:scale(1.0159,1.2458);">5</div>
<div class="a t" id="t87" style="left:121.8px;top:915.3px;height:33px;line-height:33px;font-size:16.5px;color:#f97316;font-weight:bold;font-family:'Liberation Mono',monospace;transform:scale(0.9923,1.2458);">XYLENE</div>
<div class="a t" id="t88" style="left:456.6px;top:913.8px;height:35px;line-height:35px;font-size:17.5px;color:#f1f5f9;font-weight:normal;transform:scale(0.9040,1.0000);">XYLENE (mixed isomers)</div>
<div class="a t" id="t89" style="left:1098.3px;top:916.8px;height:29px;line-height:29px;font-size:14.7px;color:#969fb4;font-weight:normal;transform:scale(0.9778,1.0000);">DIMETHYLBENZENE / XYLOL</div>
<div class="a t" id="t90" style="left:2425.7px;top:915.0px;height:32px;line-height:32px;font-size:16px;color:#1cbdd9;font-weight:bold;-webkit-text-stroke:0.5px #1cbdd9;transform:scale(0.9492,1.0800);text-decoration:underline;text-underline-offset:3px;text-decoration-thickness:1.3px">자일렌</div>
<div class="a t" id="t91" style="left:2799.8px;top:916.9px;height:28px;line-height:28px;font-size:14px;color:#969fb4;font-weight:normal;-webkit-text-stroke:0.3px #969fb4;transform:scale(0.9318,1.0080);">크실렌 · 도료·용제 원료</div>
<div class="a t" id="t92" style="left:3593.2px;top:915.3px;height:33px;line-height:33px;font-size:16.5px;color:#eef2f7;font-weight:normal;font-family:'Liberation Mono',monospace;transform:scale(1.0144,1.2458);">1307</div>
<div class="a t" id="t93" style="left:3679.8px;top:915.3px;height:33px;line-height:33px;font-size:16.5px;color:#eef2f7;font-weight:normal;font-family:'Liberation Mono',monospace;transform:scale(1.0059,1.2458);">1330-20-7</div>
<div class="a" style="left:55px;top:1005px;width:3730px;height:1px;background:#222b3d"></div>
<div class="a t" id="t94" style="left:66.6px;top:965.5px;height:33px;line-height:33px;font-size:16.5px;color:#8892a6;font-weight:normal;font-family:'Liberation Mono',monospace;transform:scale(1.0159,1.2458);">6</div>
<div class="a t" id="t95" style="left:120.2px;top:965.5px;height:33px;line-height:33px;font-size:16.5px;color:#f97316;font-weight:bold;font-family:'Liberation Mono',monospace;transform:scale(1.0144,1.2458);">MEOH</div>
<div class="a t" id="t96" style="left:455.8px;top:964.0px;height:35px;line-height:35px;font-size:17.5px;color:#f1f5f9;font-weight:normal;transform:scale(0.9325,1.0115);">METHANOL</div>
<div class="a t" id="t97" style="left:1098.3px;top:966.5px;height:29px;line-height:29px;font-size:14.7px;color:#969fb4;font-weight:normal;transform:scale(0.9957,1.0000);">METHYL ALCOHOL / WOOD ALCOHOL / CARBINOL</div>
<div class="a t" id="t98" style="left:2425.7px;top:964.8px;height:32px;line-height:32px;font-size:16px;color:#1cbdd9;font-weight:bold;-webkit-text-stroke:0.5px #1cbdd9;transform:scale(0.9487,1.0800);text-decoration:underline;text-underline-offset:3px;text-decoration-thickness:1.3px">메탄올</div>
<div class="a t" id="t99" style="left:2799.8px;top:965.5px;height:28px;line-height:28px;font-size:14px;color:#969fb4;font-weight:normal;-webkit-text-stroke:0.3px #969fb4;transform:scale(0.9460,1.0080);">메틸알코올 · 석유화학 원료·연료</div>
<div class="a t" id="t100" style="left:3593.2px;top:965.5px;height:33px;line-height:33px;font-size:16.5px;color:#eef2f7;font-weight:normal;font-family:'Liberation Mono',monospace;transform:scale(1.0144,1.2458);">1230</div>
<div class="a t" id="t101" style="left:3689.8px;top:965.5px;height:33px;line-height:33px;font-size:16.5px;color:#eef2f7;font-weight:normal;font-family:'Liberation Mono',monospace;transform:scale(1.0077,1.2458);">67-56-1</div>
<div class="a" style="left:55px;top:1055px;width:3730px;height:1px;background:#222b3d"></div>
<div class="a t" id="t102" style="left:66.6px;top:1014.7px;height:33px;line-height:33px;font-size:16.5px;color:#8892a6;font-weight:normal;font-family:'Liberation Mono',monospace;transform:scale(1.0000,1.2458);">7</div>
<div class="a t" id="t103" style="left:121.8px;top:1014.7px;height:33px;line-height:33px;font-size:16.5px;color:#f97316;font-weight:bold;font-family:'Liberation Mono',monospace;transform:scale(0.9890,1.2458);">TOLU</div>
<div class="a t" id="t104" style="left:456.6px;top:1014.2px;height:35px;line-height:35px;font-size:17.5px;color:#f1f5f9;font-weight:normal;transform:scale(0.8902,1.0115);">TOLUENE</div>
<div class="a t" id="t105" style="left:1098.3px;top:1016.2px;height:29px;line-height:29px;font-size:14.7px;color:#969fb4;font-weight:normal;transform:scale(0.9810,1.0000);">METHYLBENZENE / TOLUOL / PHENYLMETHANE</div>
<div class="a t" id="t106" style="left:2425.7px;top:1014.5px;height:32px;line-height:32px;font-size:16px;color:#1cbdd9;font-weight:bold;-webkit-text-stroke:0.5px #1cbdd9;transform:scale(0.9487,1.0800);text-decoration:underline;text-underline-offset:3px;text-decoration-thickness:1.3px">톨루엔</div>
<div class="a t" id="t107" style="left:2799.8px;top:1015.1px;height:28px;line-height:28px;font-size:14px;color:#969fb4;font-weight:normal;-webkit-text-stroke:0.3px #969fb4;transform:scale(0.9501,1.0080);">톨루올 · 석유화학 용제·TDI 원료</div>
<div class="a t" id="t108" style="left:3593.2px;top:1014.7px;height:33px;line-height:33px;font-size:16.5px;color:#eef2f7;font-weight:normal;font-family:'Liberation Mono',monospace;transform:scale(1.0144,1.2458);">1294</div>
<div class="a t" id="t109" style="left:3684.8px;top:1014.7px;height:33px;line-height:33px;font-size:16.5px;color:#eef2f7;font-weight:normal;font-family:'Liberation Mono',monospace;transform:scale(1.0067,1.2458);">108-88-3</div>
<div class="a" style="left:55px;top:1105px;width:3730px;height:1px;background:#222b3d"></div>
<div class="a t" id="t110" style="left:66.6px;top:1064.9px;height:33px;line-height:33px;font-size:16.5px;color:#8892a6;font-weight:normal;font-family:'Liberation Mono',monospace;transform:scale(1.0159,1.2458);">8</div>
<div class="a t" id="t111" style="left:120.2px;top:1064.9px;height:33px;line-height:33px;font-size:16.5px;color:#f97316;font-weight:bold;font-family:'Liberation Mono',monospace;transform:scale(1.0201,1.2458);">NH3</div>
<div class="a t" id="t112" style="left:456.6px;top:1063.0px;height:35px;line-height:35px;font-size:17.5px;color:#f1f5f9;font-weight:normal;transform:scale(0.9365,1.0000);">AMMONIA (anhydrous)</div>
<div class="a t" id="t113" style="left:1099.1px;top:1065.9px;height:29px;line-height:29px;font-size:14.7px;color:#969fb4;font-weight:normal;transform:scale(0.9619,1.0000);">ANHYDROUS AMMONIA / REFRIGERANT R-717</div>
<div class="a t" id="t114" style="left:2425.7px;top:1064.2px;height:32px;line-height:32px;font-size:16px;color:#1cbdd9;font-weight:bold;-webkit-text-stroke:0.5px #1cbdd9;transform:scale(0.9380,1.0800);text-decoration:underline;text-underline-offset:3px;text-decoration-thickness:1.3px">암모니아</div>
<div class="a t" id="t115" style="left:2799.0px;top:1064.7px;height:28px;line-height:28px;font-size:14px;color:#969fb4;font-weight:normal;-webkit-text-stroke:0.3px #969fb4;transform:scale(0.9366,1.0080);">암모니아 · 비료·냉매·화학원료</div>
<div class="a t" id="t116" style="left:3593.2px;top:1064.9px;height:33px;line-height:33px;font-size:16.5px;color:#eef2f7;font-weight:normal;font-family:'Liberation Mono',monospace;transform:scale(1.0144,1.2458);">1005</div>
<div class="a t" id="t117" style="left:3679.8px;top:1064.9px;height:33px;line-height:33px;font-size:16.5px;color:#eef2f7;font-weight:normal;font-family:'Liberation Mono',monospace;transform:scale(1.0059,1.2458);">7664-41-7</div>
<div class="a" style="left:55px;top:1154px;width:3730px;height:1px;background:#222b3d"></div>
<div class="a t" id="t118" style="left:66.6px;top:1114.1px;height:33px;line-height:33px;font-size:16.5px;color:#8892a6;font-weight:normal;font-family:'Liberation Mono',monospace;transform:scale(1.0159,1.2458);">9</div>
<div class="a t" id="t119" style="left:120.2px;top:1114.1px;height:33px;line-height:33px;font-size:16.5px;color:#f97316;font-weight:bold;font-family:'Liberation Mono',monospace;transform:scale(1.0144,1.2458);">BENZ</div>
<div class="a t" id="t120" style="left:455.8px;top:1113.6px;height:35px;line-height:35px;font-size:17.5px;color:#f1f5f9;font-weight:normal;transform:scale(0.8889,1.0115);">BENZENE</div>
<div class="a t" id="t121" style="left:1098.3px;top:1115.6px;height:29px;line-height:29px;font-size:14.7px;color:#969fb4;font-weight:normal;transform:scale(0.9704,1.0000);">BENZOL / CYCLOHEXATRIENE / PHENYL HYDRIDE</div>
<div class="a t" id="t122" style="left:2425.7px;top:1113.8px;height:32px;line-height:32px;font-size:16px;color:#1cbdd9;font-weight:bold;-webkit-text-stroke:0.5px #1cbdd9;transform:scale(0.9375,1.0800);text-decoration:underline;text-underline-offset:3px;text-decoration-thickness:1.3px">벤젠</div>
<div class="a t" id="t123" style="left:2799.0px;top:1115.3px;height:28px;line-height:28px;font-size:14px;color:#969fb4;font-weight:normal;-webkit-text-stroke:0.3px #969fb4;transform:scale(0.9613,1.0080);">벤졸 · 석유화학 기초원료</div>
<div class="a t" id="t124" style="left:3593.2px;top:1114.1px;height:33px;line-height:33px;font-size:16.5px;color:#eef2f7;font-weight:normal;font-family:'Liberation Mono',monospace;transform:scale(1.0144,1.2458);">1114</div>
<div class="a t" id="t125" style="left:3689.8px;top:1114.1px;height:33px;line-height:33px;font-size:16.5px;color:#eef2f7;font-weight:normal;font-family:'Liberation Mono',monospace;transform:scale(1.0077,1.2458);">71-43-2</div>
<div class="a" style="left:55px;top:1204px;width:3730px;height:1px;background:#222b3d"></div>
<div class="a t" id="t126" style="left:66.6px;top:1164.3px;height:33px;line-height:33px;font-size:16.5px;color:#8892a6;font-weight:normal;font-family:'Liberation Mono',monospace;transform:scale(1.0031,1.2458);">10</div>
<div class="a t" id="t127" style="left:121.8px;top:1164.3px;height:33px;line-height:33px;font-size:16.5px;color:#f97316;font-weight:bold;font-family:'Liberation Mono',monospace;transform:scale(0.9849,1.2458);">CL2</div>
<div class="a t" id="t128" style="left:456.6px;top:1162.8px;height:35px;line-height:35px;font-size:17.5px;color:#f1f5f9;font-weight:normal;transform:scale(0.8778,1.0115);">CHLORINE</div>
<div class="a t" id="t129" style="left:1098.3px;top:1165.3px;height:29px;line-height:29px;font-size:14.7px;color:#969fb4;font-weight:normal;transform:scale(0.9691,1.0000);">MOLECULAR CHLORINE / BERTHOLITE</div>
<div class="a t" id="t130" style="left:2425.7px;top:1163.5px;height:32px;line-height:32px;font-size:16px;color:#1cbdd9;font-weight:bold;-webkit-text-stroke:0.5px #1cbdd9;transform:scale(0.9375,1.0800);text-decoration:underline;text-underline-offset:3px;text-decoration-thickness:1.3px">염소</div>
<div class="a t" id="t131" style="left:2799.0px;top:1164.9px;height:28px;line-height:28px;font-size:14px;color:#969fb4;font-weight:normal;-webkit-text-stroke:0.3px #969fb4;transform:scale(0.9524,1.0080);">염소가스 · 수처리·화학공업</div>
<div class="a t" id="t132" style="left:3593.2px;top:1164.3px;height:33px;line-height:33px;font-size:16.5px;color:#eef2f7;font-weight:normal;font-family:'Liberation Mono',monospace;transform:scale(1.0144,1.2458);">1017</div>
<div class="a t" id="t133" style="left:3679.8px;top:1164.3px;height:33px;line-height:33px;font-size:16.5px;color:#eef2f7;font-weight:normal;font-family:'Liberation Mono',monospace;transform:scale(1.0059,1.2458);">7782-50-5</div>
<div class="a" style="left:1693px;top:1222px;width:63px;height:37px;border-radius:8px;background:#161c2b;border:1px solid #1b2232"></div>
<div class="a" style="left:1764px;top:1222px;width:53px;height:37px;border-radius:8px;background:#161c2b;border:1px solid #1b2232"></div>
<div class="a" style="left:1825px;top:1222px;width:42px;height:37px;border-radius:8px;background:#3a2a30;border:1px solid #3d2e33"></div>
<div class="a" style="left:1875px;top:1222px;width:45px;height:37px;border-radius:8px;background:#0c111d"></div>
<div class="a" style="left:1928px;top:1222px;width:53px;height:37px;border-radius:8px;background:#0c111d"></div>
<div class="a" style="left:1989px;top:1222px;width:63px;height:37px;border-radius:8px;background:#0c111d"></div>
<svg class="a" style="left:1709px;top:1232px" width="14" height="16"><path d="M14 0 L14 16 L0 8.0 Z" fill="#5f687c"/></svg>
<svg class="a" style="left:1725px;top:1232px" width="14" height="16"><path d="M14 0 L14 16 L0 8.0 Z" fill="#5f687c"/></svg>
<svg class="a" style="left:1784px;top:1232px" width="13" height="16"><path d="M13 0 L13 16 L0 8.0 Z" fill="#5f687c"/></svg>
<svg class="a" style="left:1948px;top:1232px" width="13" height="16"><path d="M0 0 L0 16 L13 8.0 Z" fill="#b4bed6"/></svg>
<svg class="a" style="left:2005px;top:1232px" width="14" height="16"><path d="M0 0 L0 16 L14 8.0 Z" fill="#b4bed6"/></svg>
<svg class="a" style="left:2022px;top:1232px" width="14" height="16"><path d="M0 0 L0 16 L14 8.0 Z" fill="#b4bed6"/></svg>
<div class="a t" id="t134" style="left:1842.7px;top:1224.0px;height:32px;line-height:32px;font-size:16px;color:#f97316;font-weight:bold;-webkit-text-stroke:0.5px #f97316;transform:scale(0.7656,1.0328);">1</div>
<div class="a t" id="t135" style="left:1892.7px;top:1223.5px;height:32px;line-height:32px;font-size:16px;color:#e2e8f0;font-weight:normal;transform:scale(1.1111,1.1000);">2</div>
<div class="a t" id="t136" style="left:2068.9px;top:1225.0px;height:30px;line-height:30px;font-size:15px;color:#8e9ab0;font-weight:normal;transform:scale(1.0279,1.0500);">1 / 2 페이지</div>
<div class="a t" id="t137" style="left:1875.0px;top:1265.5px;height:30px;line-height:30px;font-size:15px;color:#8e9ab0;font-weight:normal;transform:scale(1.0609,0.9498);">총 <b style="color:#f97316">20</b>종 등록</div>
</body></html>
